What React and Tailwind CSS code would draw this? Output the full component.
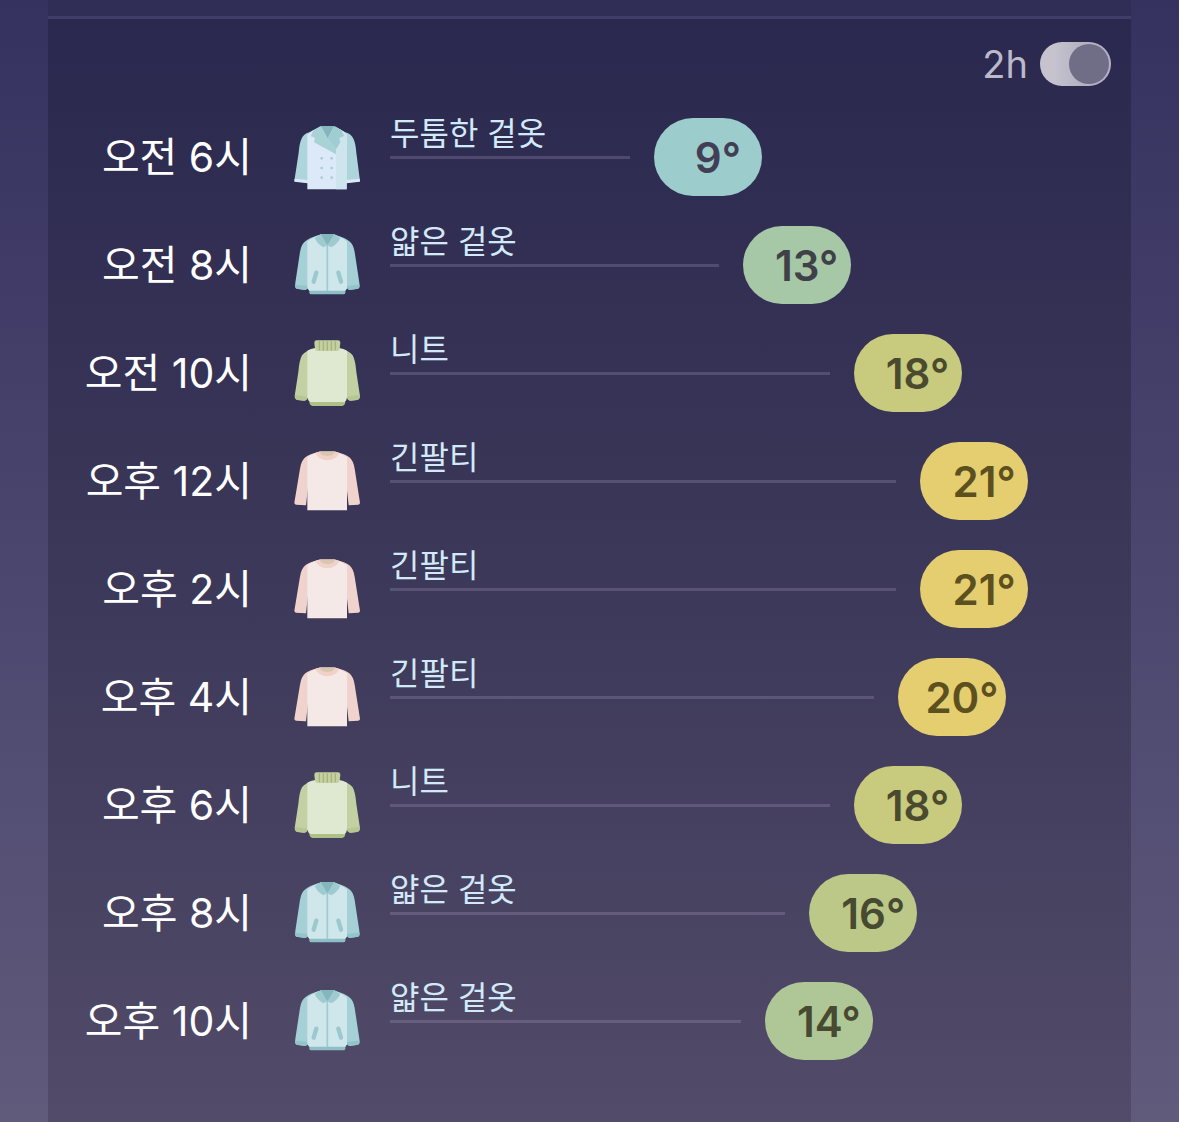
import React, { useState } from 'react';

const CoatIcon = () => (
  <svg viewBox="42 33 198 216" className="w-[66px] h-[72px] shrink-0" aria-hidden="true">
    <path d="M122 49 L88 67 Q70 72 64 88 Q58 102 56 128 L43 213 L86 219 L92 70Z" fill="#aed5db" />
    <path d="M163 49 L196 67 Q214 72 221 88 Q227 102 229 128 L240 213 L197 219 L190 70Z" fill="#aed5db" />
    <path d="M44 206 L84 210 V220 L43 215Z" fill="#dbe9f7" />
    <path d="M239 206 L199 210 V220 L240 215Z" fill="#dbe9f7" />
    <path d="M82 74 Q96 62 118 52 H166 Q188 62 200 74 V238 H82Z" fill="#dbe9f8" />
    <path d="M168 52 Q190 62 200 74 V238 H168Z" fill="#cfe5ee" />
    <path d="M122 48 H163 L143 86Z" fill="#84b6bc" />
    <path d="M122 48 L100 62 L92 78 L105 84 L102 97 L168 133 V118 L143 86Z" fill="#a9d2d6" />
    <path d="M163 48 L184 60 L192 78 L178 84 L181 97 L168 118 L143 86Z" fill="#a0cdd1" />
    <g fill="#a9cbd8">
      <circle cx="125" cy="145" r="4" />
      <circle cx="155" cy="145" r="4" />
      <circle cx="125" cy="174" r="4" />
      <circle cx="155" cy="174" r="4" />
      <circle cx="125" cy="203" r="4" />
      <circle cx="155" cy="203" r="4" />
    </g>
  </svg>
);

const JacketIcon = () => (
  <svg viewBox="42 27 198 216" className="w-[66px] h-[72px] shrink-0" aria-hidden="true">
    <path d="M118 44 Q86 54 76 64 Q64 72 60 96 L46 188 Q44 204 50 206 L76 210 Q84 208 86 190 L94 70Z" fill="#a5d1d6" />
    <path d="M165 44 Q198 54 208 64 Q220 72 224 96 L238 188 Q240 204 234 206 L208 210 Q200 208 198 190 L190 70Z" fill="#a5d1d6" />
    <path d="M45 194 L84 198 Q82 210 74 210 L50 206 Q44 204 45 194Z" fill="#92c4ca" />
    <path d="M239 194 L200 198 Q202 210 210 210 L234 206 Q240 204 239 194Z" fill="#92c4ca" />
    <path d="M82 64 Q96 54 116 46 H168 Q188 54 201 64 V205 L196 213 H88 L82 205Z" fill="#cfe6eb" />
    <path d="M88 212 H196 V218 Q196 223 190 223 H94 Q88 223 88 218Z" fill="#8ebfc5" />
    <path d="M120 42 H165 L142 78Z" fill="#84b6bc" />
    <path d="M122 42 L104 54 Q112 72 130 82 L142 76Z" fill="#9ecbd0" />
    <path d="M163 42 L181 54 Q173 72 154 82 L142 76Z" fill="#9ecbd0" />
    <path d="M142 74 V213" stroke="#9ecbd3" strokeWidth="5" />
    <path d="M109 158 L101 185" stroke="#9ac9cf" strokeWidth="13" strokeLinecap="round" />
    <path d="M175 158 L183 185" stroke="#9ac9cf" strokeWidth="13" strokeLinecap="round" />
  </svg>
);

const KnitIcon = () => (
  <svg viewBox="42 27 198 216" className="w-[66px] h-[72px] shrink-0" aria-hidden="true">
    <path d="M100 62 Q76 68 66 82 Q58 96 55 132 L44 204 Q44 214 54 216 L74 218 Q82 216 86 202 L94 70Z" fill="#c2d0a3" />
    <path d="M184 62 Q208 68 218 82 Q226 96 229 132 L240 204 Q240 214 230 216 L210 218 Q202 216 198 202 L190 70Z" fill="#c2d0a3" />
    <path d="M45 200 L84 206 Q81 218 72 218 L52 216 Q43 213 45 200Z" fill="#b7c794" />
    <path d="M239 200 L200 206 Q203 218 212 218 L232 216 Q241 213 239 200Z" fill="#b7c794" />
    <path d="M82 68 Q92 62 106 60 H178 Q190 62 201 68 V206 Q200 222 190 223 H94 Q84 222 82 206Z" fill="#dfe9d2" />
    <path d="M88 222 H196 Q195 233 186 234 H98 Q89 233 88 222Z" fill="#afc087" />
    <path d="M110 37 H174 Q181 37 181 44 L179 62 Q178 69 170 69 H114 Q106 69 105 62 L103 44 Q103 37 110 37Z" fill="#c5d0a0" />
    <path d="M118 40 V67 M130 40 V68 M142 40 V68 M154 40 V68 M166 40 V67" stroke="#a5b57f" strokeWidth="4" />
  </svg>
);

const LongSleeveIcon = () => (
  <svg viewBox="42 27 198 216" className="w-[66px] h-[72px] shrink-0" aria-hidden="true">
    <path d="M118 47 Q88 54 76 64 Q64 74 60 98 L43 200 Q43 205 48 206 L78 208 L94 66Z" fill="#f1d3ce" />
    <path d="M166 47 Q196 54 208 64 Q220 74 224 98 L240 200 Q240 205 235 206 L206 208 L190 66Z" fill="#f1d3ce" />
    <path d="M82 64 Q96 54 114 48 H168 Q188 54 201 64 V223 H82Z" fill="#f5e9e8" />
    <path d="M106 51 L120 46 H164 L178 51 Q168 73 142 73 Q116 73 106 51Z" fill="#f2d1c8" />
    <path d="M119 47 H165 Q160 60 142 60 Q124 60 119 47Z" fill="#d9c6b0" />
  </svg>
);

const forecast = [
  { time: '오전 6시', temp: 9, label: '두툼한 겉옷', Icon: CoatIcon, pill: 'bg-[#9ccccb] text-[#413e55]' },
  { time: '오전 8시', temp: 13, label: '얇은 겉옷', Icon: JacketIcon, pill: 'bg-[#a6c8a6] text-[#3f4048]' },
  { time: '오전 10시', temp: 18, label: '니트', Icon: KnitIcon, pill: 'bg-[#c8ca7e] text-[#4b4a2e]' },
  { time: '오후 12시', temp: 21, label: '긴팔티', Icon: LongSleeveIcon, pill: 'bg-[#e5ce70] text-[#5c501f]' },
  { time: '오후 2시', temp: 21, label: '긴팔티', Icon: LongSleeveIcon, pill: 'bg-[#e5ce70] text-[#5c501f]' },
  { time: '오후 4시', temp: 20, label: '긴팔티', Icon: LongSleeveIcon, pill: 'bg-[#e5ce70] text-[#5c501f]' },
  { time: '오후 6시', temp: 18, label: '니트', Icon: KnitIcon, pill: 'bg-[#c8ca7e] text-[#4b4a2e]' },
  { time: '오후 8시', temp: 16, label: '얇은 겉옷', Icon: JacketIcon, pill: 'bg-[#bcc887] text-[#474a30]' },
  { time: '오후 10시', temp: 14, label: '얇은 겉옷', Icon: JacketIcon, pill: 'bg-[#afc797] text-[#474a30]' },
];

// share of the track taken by the line, in percent
const lineWidth = (temp) => 5.74 + temp * 3.17;

const ForecastRow = ({ time, temp, label, Icon, pill }) => {
  return (
    <li className="flex items-center h-27">
      <span className="w-[204px] shrink-0 text-right text-[41px] leading-12 text-white whitespace-nowrap">
        {time}
      </span>
      <div className="ml-[42px] mr-[30px] shrink-0">
        <Icon />
      </div>
      <div className="flex flex-1 items-center">
        <div style={{ width: `${lineWidth(temp)}%` }} className="shrink-0 pb-11">
          <p className="h-11 text-[32px] leading-11 text-[#d2e9f7] whitespace-nowrap">{label}</p>
          <div className="h-[3px] bg-[#b9a8cf]/24" />
        </div>
        <span
          className={`ml-6 flex h-[78px] w-27 shrink-0 items-center justify-center rounded-full pl-5 text-[42px] font-semibold ${pill}`}
        >
          {temp}°
        </span>
      </div>
    </li>
  );
};

function App() {

  const [twoHours, setTwoHours] = useState(true);

  return (
    <div className="min-h-screen flex flex-col px-12 bg-linear-to-b from-[#363260] to-[#605a7b] font-['Inter','Noto_Sans_CJK_KR',sans-serif]">
      <div className="h-4 bg-[#302d57]" />
      <main className="flex-1 border-t-3 border-[#413c69] bg-linear-to-b from-[#2b284f] via-[#3c3859] to-[#524b69] pb-11">
        {/* Interval switch */}
        <div className="flex justify-end pt-[23px] pr-5">
          <label className="flex items-center gap-3 text-[38px] leading-11 text-[#bcb9c9] cursor-pointer">
            2h
            <input
              type="checkbox"
              role="switch"
              checked={twoHours}
              onChange={() => setTwoHours(!twoHours)}
              className="peer sr-only"
            />
            <span className="flex h-11 w-[71px] items-center justify-start rounded-full bg-linear-to-r from-[#c6c3cf] from-20% to-[#b3b1c2] to-60% p-[2px] peer-checked:justify-end">
              <span className="size-10 rounded-full bg-[#6f6e86]" />
            </span>
          </label>
        </div>

        {/* Hours */}
        <ul className="mt-[17px] pr-[41px]">
          {forecast.map((item) => (
            <ForecastRow key={item.time} {...item} />
          ))}
        </ul>
      </main>
    </div>
  );
}

export default App;
